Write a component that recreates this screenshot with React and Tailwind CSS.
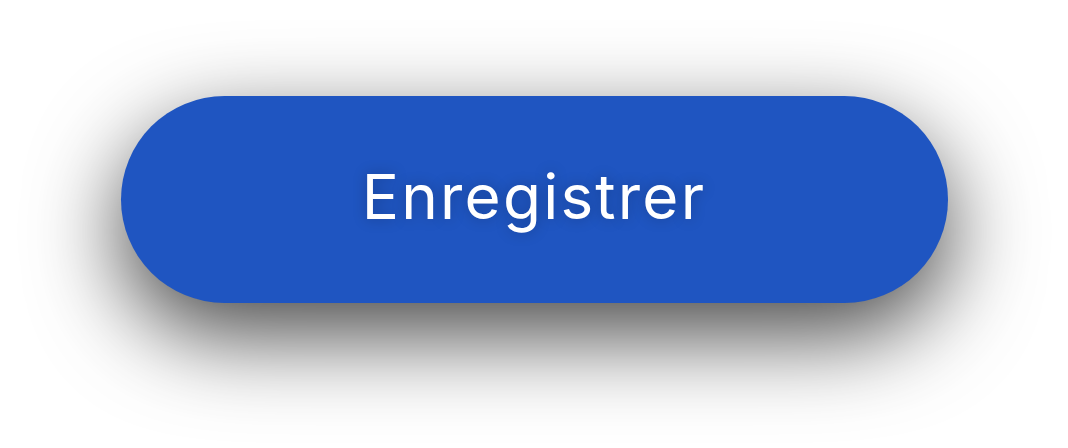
import React from "react";

export default function App() {
  return (
    <div className="h-[448px] w-full bg-white flex justify-center pt-[96px]">
      <button
        type="button"
        className="w-[827px] h-[207px] rounded-full bg-[#1f55c1] text-white text-[62px] tracking-[2.2px] font-normal leading-none flex items-center justify-center pb-[6px] font-[Inter,'Noto_Sans',sans-serif] shadow-[0_32px_90px_rgba(0,0,0,0.72)] [text-shadow:0_0_14px_rgba(0,0,0,0.25)]"
      >
        Enregistrer
      </button>
    </div>
  );
}
